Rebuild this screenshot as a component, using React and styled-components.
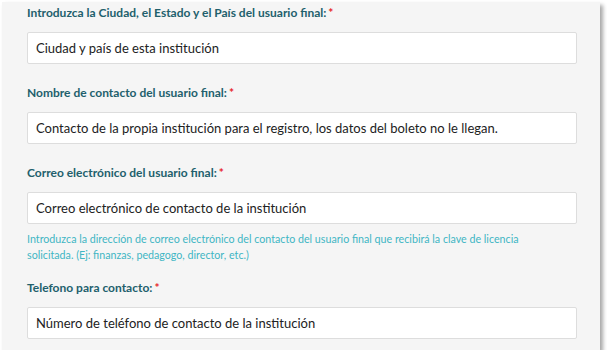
import React from "react";
import styled, { createGlobalStyle } from "styled-components";

const fields = [
  {
    label: "Introduzca la Ciudad, el Estado y el País del usuario final:",
    value: "Ciudad y país de esta institución",
  },
  {
    label: "Nombre de contacto del usuario final:",
    value:
      "Contacto de la propia institución para el registro, los datos del boleto no le llegan.",
  },
  {
    label: "Correo electrónico del usuario final:",
    value: "Correo electrónico de contacto de la institución",
    help:
      "Introduzca la dirección de correo electrónico del contacto del usuario final que recibirá la clave de licencia solicitada. (Ej: finanzas, pedagogo, director, etc.)",
  },
  {
    label: "Telefono para contacto:",
    value: "Número de teléfono de contacto de la institución",
  },
];

function App() {
  return (
    <>
      <GlobalStyle />
      <Panel>
        {fields.map((f) => (
          <Field key={f.label}>
            <Label>
              {f.label}
              <Required>*</Required>
            </Label>
            <Input readOnly value={f.value} />
            {f.help && <Help>{f.help}</Help>}
          </Field>
        ))}
      </Panel>
    </>
  );
}

const GlobalStyle = createGlobalStyle`
  body {
    margin: 0;
    background: #ffffff;
    font-family: Lato, "Open Sans", sans-serif;
  }
`;

const Panel = styled.div`
  width: 598px;
  height: 348px;
  box-sizing: border-box;
  margin: 2px 0 0 2px;
  padding: 2px 23px 0 25px;
  background: #f5f5f5;
  box-shadow: 3px 3px 4px rgba(0, 0, 0, 0.35);
  display: flex;
  flex-direction: column;
  gap: 20px;
`;

const Field = styled.div`
  display: flex;
  flex-direction: column;
`;

const Label = styled.label`
  font-size: 12px;
  font-weight: 700;
  line-height: 18px;
  color: #22606c;
  margin-bottom: 10px;
`;

const Required = styled.span`
  color: #e8232a;
  margin-left: 2px;
`;

const Input = styled.input`
  height: 32px;
  box-sizing: border-box;
  border: 1px solid #dddddd;
  border-radius: 2px;
  background: #ffffff;
  padding: 0 8px;
  font-family: Lato, "Open Sans", sans-serif;
  font-size: 13px;
  color: #222222;
  outline: none;
`;

const Help = styled.div`
  max-width: 510px;
  margin-top: 7px;
  margin-bottom: -4px;
  font-size: 10.7px;
  line-height: 16px;
  color: #3fb6c4;
`;

export default App;
